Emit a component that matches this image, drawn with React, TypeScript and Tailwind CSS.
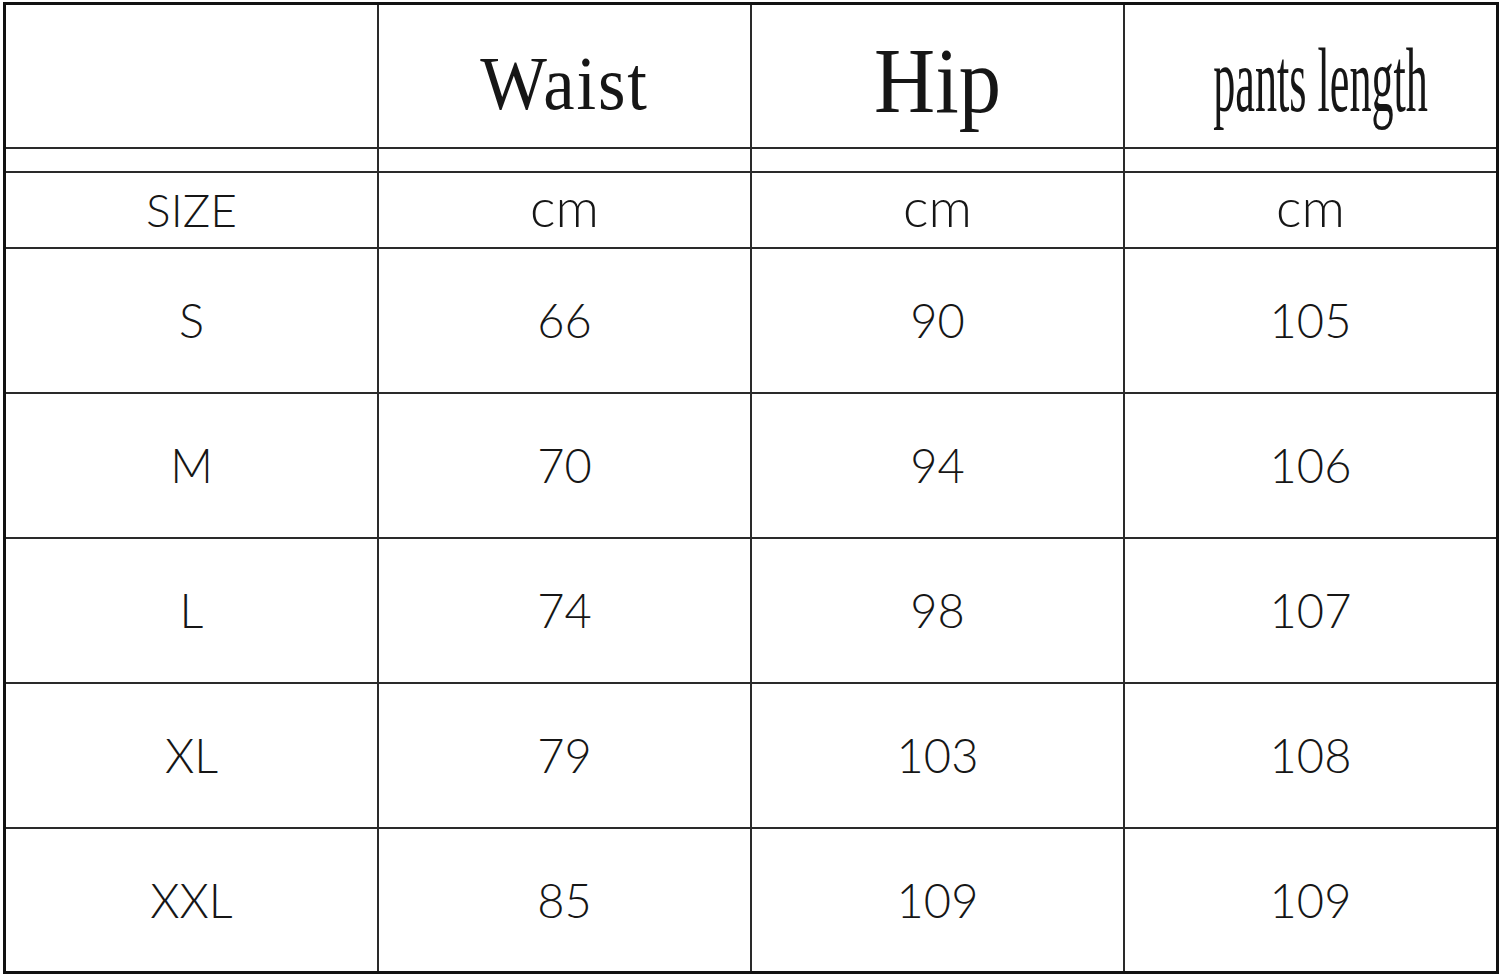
const COLS = ['Waist', 'Hip', 'pants length'];

const ROWS = [
    ['S', '66', '90', '105'],
    ['M', '70', '94', '106'],
    ['L', '74', '98', '107'],
    ['XL', '79', '103', '108'],
    ['XXL', '85', '109', '109']
];

const sans = "font-['Lato','Open_Sans',sans-serif] font-light";

export default function App() {
    return (
        <div className="w-[1500px] h-[977px] bg-white pt-[2px] pl-[3px]">
            <div
                className={`w-[1496px] h-[972px] border-[3px] border-[#111] bg-[#2a2a2a] grid grid-cols-[371px_371px_371px_371px] grid-rows-[142px_22px_74px_143px_143px_143px_143px_142px] gap-[2px] text-[#161616] ${sans}`}
            >
                {/* header row */}
                <div className="bg-white" />
                <div className="bg-white flex items-center justify-center pt-[14px]">
                    <span className="font-['Liberation_Serif','Times_New_Roman',serif] font-normal text-[76px] leading-none tracking-[2px] inline-block scale-x-[0.93]">
                        {COLS[0]}
                    </span>
                </div>
                <div className="bg-white flex items-center justify-center pt-[8px]">
                    <span className="font-['Liberation_Serif','Times_New_Roman',serif] font-normal text-[94px] leading-none inline-block scale-x-[0.9]">
                        {COLS[1]}
                    </span>
                </div>
                <div className="bg-white flex items-center justify-center pt-[8px] pl-[20px]">
                    <span className="font-['Liberation_Serif','Times_New_Roman',serif] font-normal text-[92px] leading-none whitespace-nowrap inline-block scale-x-[0.48]">
                        {COLS[2]}
                    </span>
                </div>

                {/* thin spacer row */}
                <div className="bg-white" />
                <div className="bg-white" />
                <div className="bg-white" />
                <div className="bg-white" />

                {/* units row */}
                <div className="bg-white flex items-center justify-center text-[46px] leading-none">SIZE</div>
                <div className="bg-white flex items-center justify-center text-[54px] leading-none pb-[6px]">cm</div>
                <div className="bg-white flex items-center justify-center text-[54px] leading-none pb-[6px]">cm</div>
                <div className="bg-white flex items-center justify-center text-[54px] leading-none pb-[6px]">cm</div>

                {ROWS.map((row) =>
                    row.map((cell, i) => (
                        <div
                            key={row[0] + i}
                            className="bg-white flex items-center justify-center text-[47px] leading-none"
                        >
                            {cell}
                        </div>
                    ))
                )}
            </div>
        </div>
    );
}
